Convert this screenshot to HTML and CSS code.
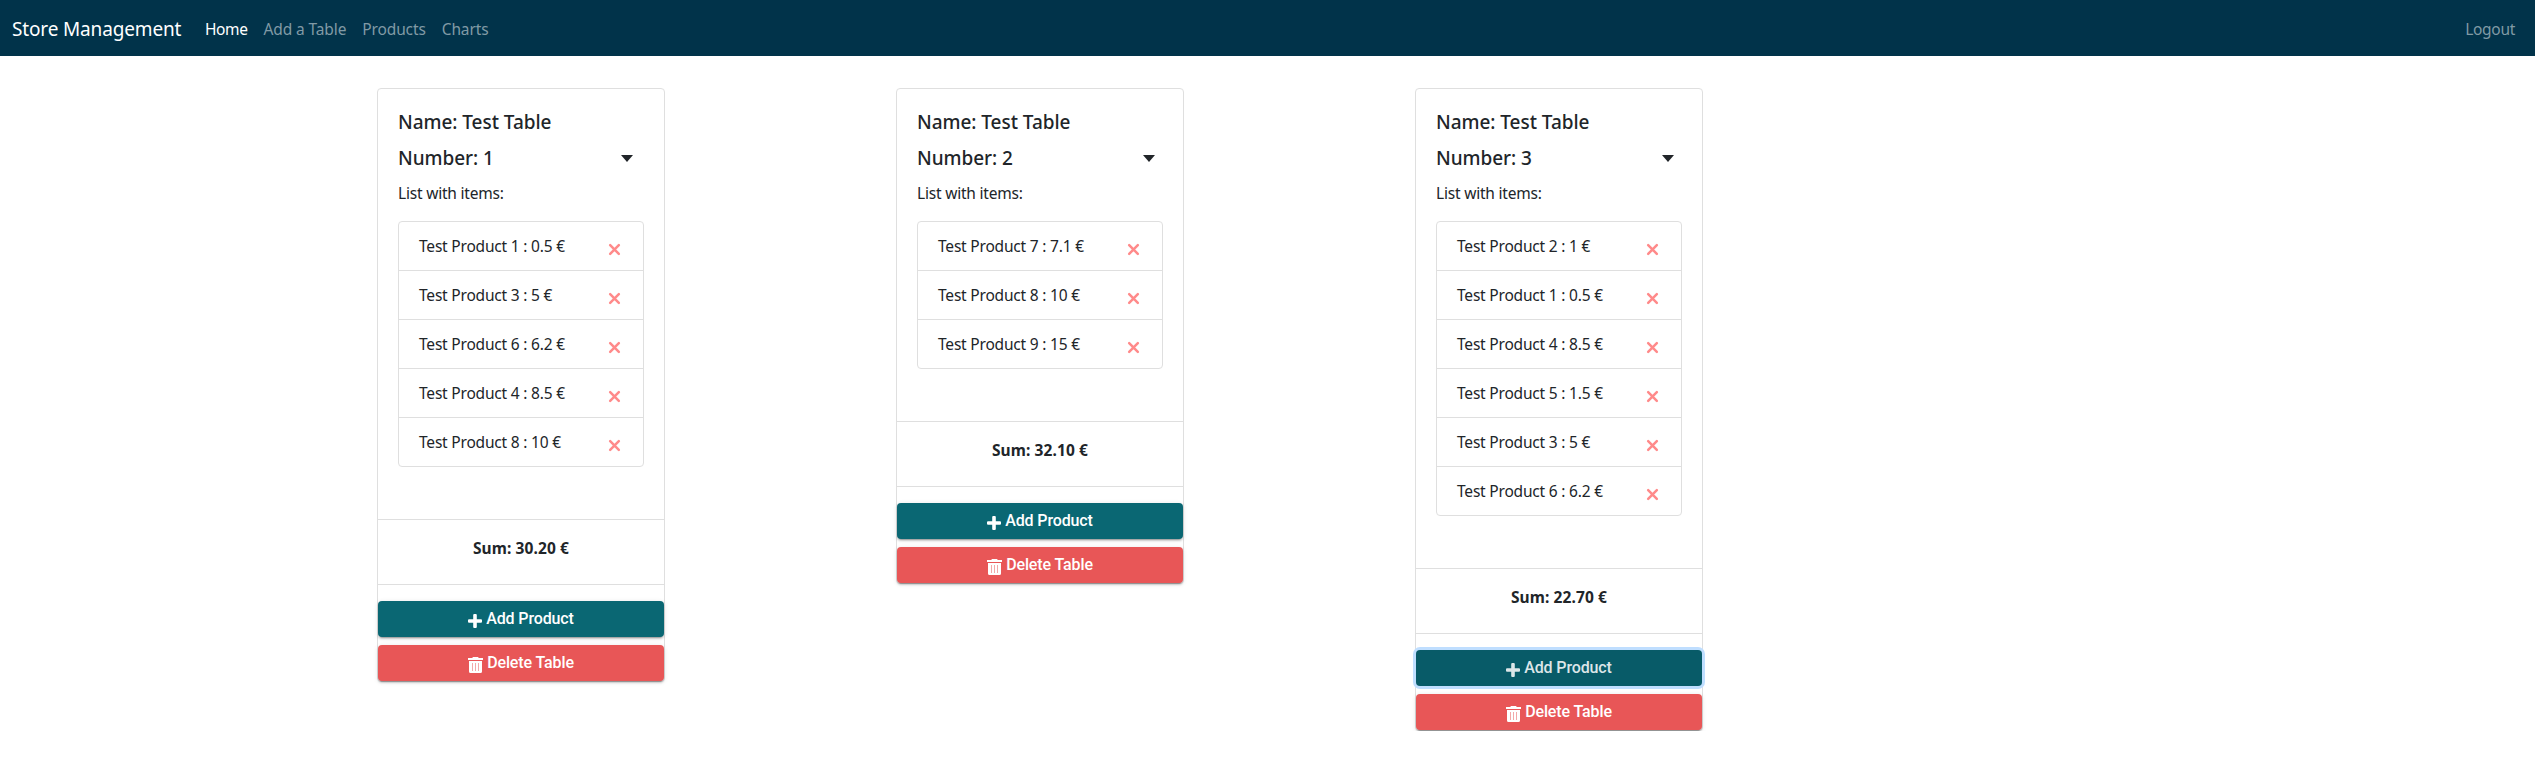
FILE: index.html
```html
<!DOCTYPE html>
<html lang="en">
<head>
<meta charset="utf-8">
<title>Store Management</title>
<link rel="stylesheet" href="styles.css">
</head>
<body>
<svg class="sprite" aria-hidden="true">
  <symbol id="plus" viewBox="0 0 14 14"><path d="M5.2 1q0-1 1-1h1.6q1 0 1 1v4.2H13q1 0 1 1v1.6q0 1-1 1H8.8V13q0 1-1 1H6.200q-1 0-1-1V8.800H1q-1 0-1-1V6.200q0-1 1-1h4.200z"/></symbol>
  <symbol id="trash" viewBox="0 0 15 16"><path d="M0 1h4.300l.6-1h5.200l.6 1H15v2H0zM1 4h13v10.500q0 1.500-1.500 1.500h-10Q1 16 1 14.500z"/><path class="slots" d="M4 6h1v8H4zM7 6h1v8H7zM10 6h1v8h-1z"/></symbol>
  <symbol id="cross" viewBox="0 0 12 12"><path d="M2 2l8 8M10 2l-8 8" fill="none" stroke="currentColor" stroke-width="2.300" stroke-linecap="round"/></symbol>
</svg>
<nav class="navbar">
  <a class="brand">Store Management</a>
  <a class="nav-link active">Home</a>
  <a class="nav-link">Add a Table</a>
  <a class="nav-link">Products</a>
  <a class="nav-link">Charts</a>
  <a class="nav-link logout">Logout</a>
</nav>
<main class="tables">
  <section class="card">
    <div class="card-body">
      <h5>Name: Test Table</h5>
      <h5 class="number narrow">Number: 1<i class="caret"></i></h5>
      <p>List with items:</p>
      <ul class="items">
        <li><span>Test Product 1 : 0.5 €</span><svg><use href="#cross"/></svg></li>
        <li><span>Test Product 3 : 5 €</span><svg><use href="#cross"/></svg></li>
        <li><span>Test Product 6 : 6.2 €</span><svg><use href="#cross"/></svg></li>
        <li><span>Test Product 4 : 8.5 €</span><svg><use href="#cross"/></svg></li>
        <li><span>Test Product 8 : 10 €</span><svg><use href="#cross"/></svg></li>
      </ul>
    </div>
    <div class="sum">Sum: 30.20 €</div>
    <button class="btn btn-add"><svg class="plus"><use href="#plus"/></svg><span>Add Product</span></button>
    <button class="btn btn-delete"><svg class="trash"><use href="#trash"/></svg><span>Delete Table</span></button>
  </section>
  <section class="card">
    <div class="card-body">
      <h5>Name: Test Table</h5>
      <h5 class="number">Number: 2<i class="caret"></i></h5>
      <p>List with items:</p>
      <ul class="items">
        <li><span>Test Product 7 : 7.1 €</span><svg><use href="#cross"/></svg></li>
        <li><span>Test Product 8 : 10 €</span><svg><use href="#cross"/></svg></li>
        <li><span>Test Product 9 : 15 €</span><svg><use href="#cross"/></svg></li>
      </ul>
    </div>
    <div class="sum">Sum: 32.10 €</div>
    <button class="btn btn-add"><svg class="plus"><use href="#plus"/></svg><span>Add Product</span></button>
    <button class="btn btn-delete"><svg class="trash"><use href="#trash"/></svg><span>Delete Table</span></button>
  </section>
  <section class="card">
    <div class="card-body">
      <h5>Name: Test Table</h5>
      <h5 class="number">Number: 3<i class="caret"></i></h5>
      <p>List with items:</p>
      <ul class="items">
        <li><span>Test Product 2 : 1 €</span><svg><use href="#cross"/></svg></li>
        <li><span>Test Product 1 : 0.5 €</span><svg><use href="#cross"/></svg></li>
        <li><span>Test Product 4 : 8.5 €</span><svg><use href="#cross"/></svg></li>
        <li><span>Test Product 5 : 1.5 €</span><svg><use href="#cross"/></svg></li>
        <li><span>Test Product 3 : 5 €</span><svg><use href="#cross"/></svg></li>
        <li><span>Test Product 6 : 6.2 €</span><svg><use href="#cross"/></svg></li>
      </ul>
    </div>
    <div class="sum">Sum: 22.70 €</div>
    <button class="btn btn-add focused"><svg class="plus"><use href="#plus"/></svg><span>Add Product</span></button>
    <button class="btn btn-delete"><svg class="trash"><use href="#trash"/></svg><span>Delete Table</span></button>
  </section>
</main>
</body>
</html>
```

FILE: styles.css
```css
* { box-sizing: border-box; }
body {
  margin: 0;
  background: #fff;
  color: #212529;
  font: 15.5px/24px "Noto Sans", "Open Sans", sans-serif;
  letter-spacing: -0.2px;
  white-space: nowrap;
}
.sprite { display: none; }
.navbar {
  display: flex;
  align-items: center;
  height: 56px;
  padding: 0 20px 0 12px;
  background: #01334a;
}
.brand {
  width: 193px;
  margin-top: 2px;
  color: #fff;
  font-size: 19px;
  line-height: 30px;
  letter-spacing: -0.15px;
}
.nav-link { margin: 1px 16px 0 0; color: #809aa5; letter-spacing: -0.12px; }
.nav-link.active { color: #fff; letter-spacing: -0.4px; }
.nav-link.logout { margin: 1px 0 0 auto; letter-spacing: -0.3px; }
.tables {
  display: grid;
  grid-template-columns: repeat(3, 288px);
  column-gap: 231px;
  align-items: start;
  padding: 32px 0 0 377px;
}
.card {
  display: flex;
  flex-direction: column;
  border: 1px solid #dfdfdf;
  border-radius: 4px;
}
.card-body { padding: 21px 20px 52px; }
h5 {
  display: flex;
  align-items: center;
  margin: 0 0 12px;
  font-size: 19px;
  font-weight: 500;
  line-height: 24px;
  letter-spacing: -0.05px;
}
.number { justify-content: space-between; padding-right: 8px; margin-bottom: 11px; }
.number.narrow { padding-right: 11px; }
.caret {
  border: 6px solid transparent;
  border-top: 7px solid #212529;
  border-bottom: 0;
}
p { margin: 0 0 16px; }
.items {
  margin: 0;
  padding: 0;
  list-style: none;
  border: 1px solid #dfdfdf;
  border-radius: 4px;
}
.items li {
  display: flex;
  justify-content: space-between;
  align-items: center;
  height: 49px;
  padding: 0 22px 0 20px;
  border-bottom: 1px solid #dfdfdf;
}
.items li:last-child { height: 48px; border-bottom: 0; }
.items svg { width: 13px; height: 13px; margin-top: 6px; color: #ff8a8a; }
.sum {
  height: 66px;
  margin-bottom: 16px;
  padding-top: 16px;
  border: 1px solid #dfdfdf;
  border-width: 1px 0;
  font-weight: 700;
  letter-spacing: 0.1px;
  text-align: center;
}
.btn {
  display: flex;
  align-items: center;
  justify-content: center;
  gap: 4px;
  height: 36px;
  margin: 0 0 8px;
  padding: 0;
  border: 0;
  border-radius: 4px;
  color: #fff;
  font: 500 16px/36px Roboto, sans-serif;
  letter-spacing: -0.12px;
  box-shadow: 0 3px 1px -2px rgba(0,0,0,.2), 0 2px 2px rgba(0,0,0,.14), 0 1px 5px rgba(0,0,0,.12);
}
.btn svg { fill: currentColor; margin-top: 3px; }
.plus { width: 14px; height: 14px; }
.trash { width: 15px; height: 16px; }
.slots { fill: #f3a9a9; }
.btn-add { background: #0a6773; }
.btn-delete { margin-bottom: 0; background: #e85657; }
.focused { background: #085b68; color: #dce6e8; box-shadow: 0 0 0 3px #bfdeff; }
```
